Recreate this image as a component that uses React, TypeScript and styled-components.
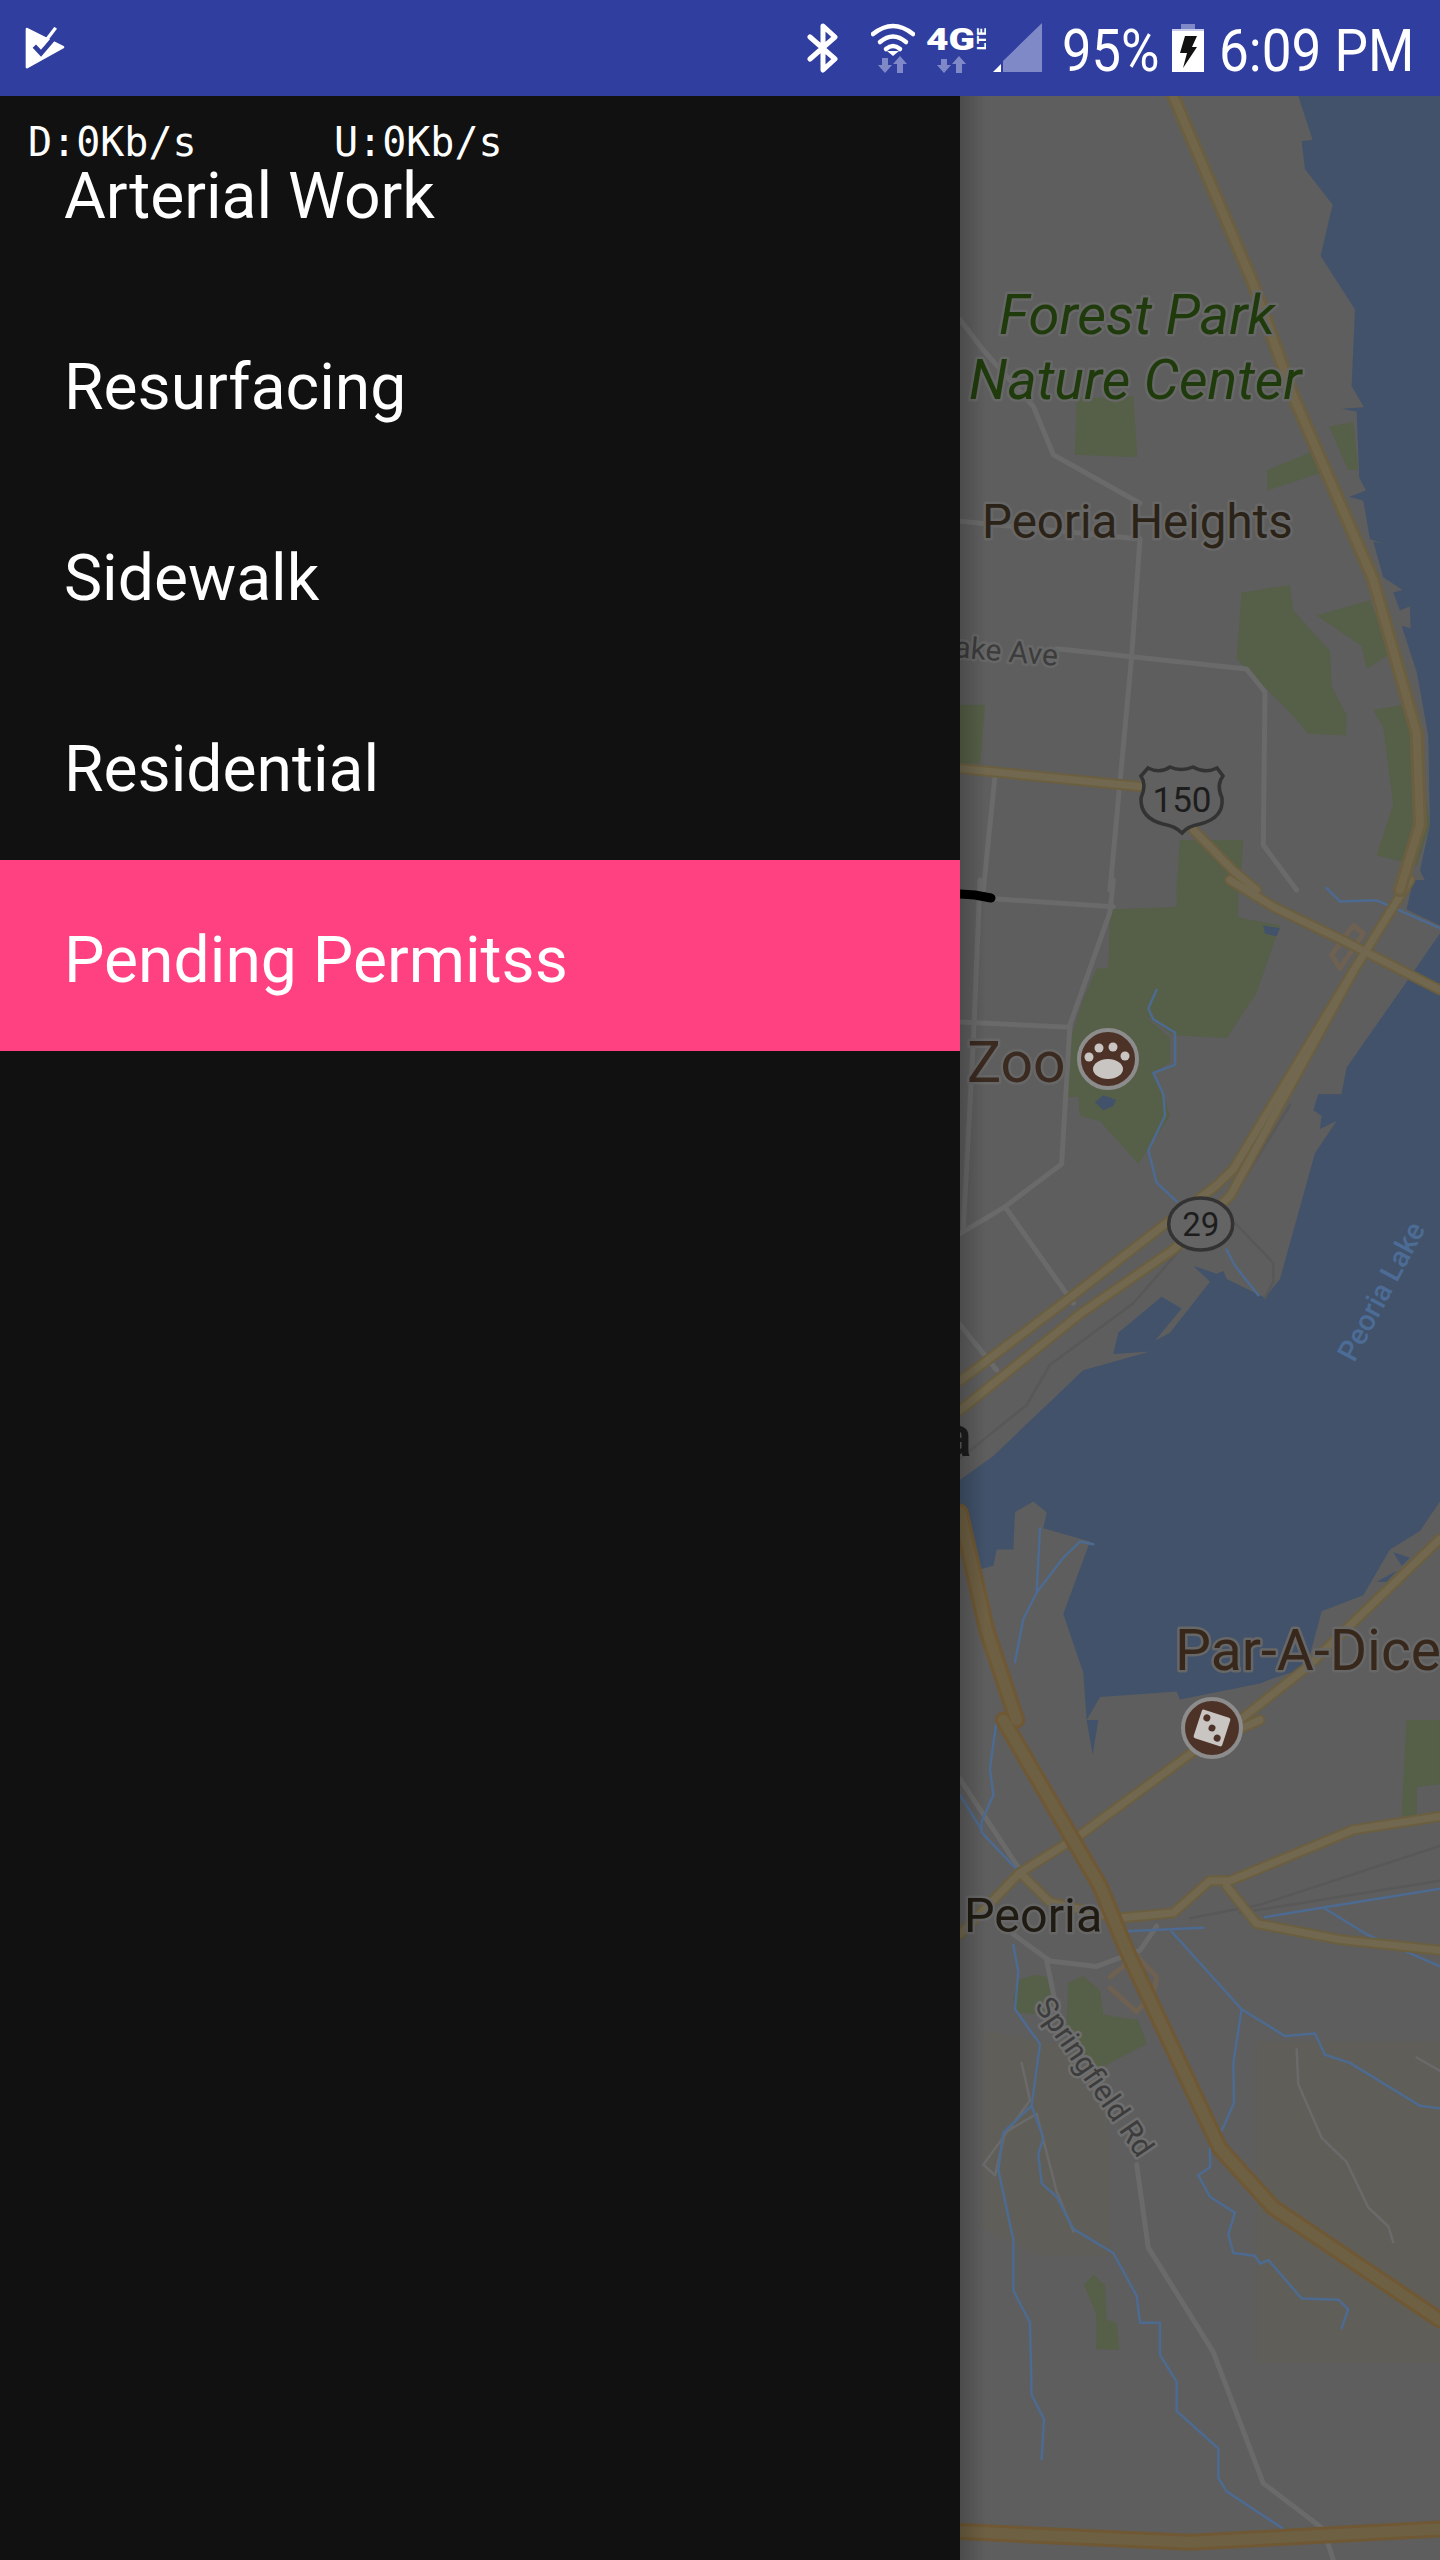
import React from "react";
import styled, { createGlobalStyle } from "styled-components";

const Global = createGlobalStyle`
  html, body { margin: 0; padding: 0; background: #111111; }
  body { font-family: Roboto, "Liberation Sans", sans-serif; }
`;

const Screen = styled.div`
  width: 1440px;
  height: 2560px;
  display: flex;
  flex-direction: column;
  overflow: hidden;
`;

const StatusBar = styled.header`
  height: 96px;
  flex: none;
  background: #303f9f;
  display: flex;
  align-items: center;
  justify-content: space-between;
  padding: 0 25px 0 25px;
  color: #ffffff;
`;

const StatusGroup = styled.div`
  display: flex;
  align-items: center;
`;

const StatusText = styled.span<{ $gap: number; $width: number; $scale: number }>`
  display: inline-block;
  width: ${(p) => p.$width}px;
  margin: 6px 0 0 ${(p) => p.$gap}px;
  font-size: 60px;
  line-height: 90px;
  white-space: nowrap;
  transform: scaleX(${(p) => p.$scale});
  transform-origin: left center;
`;

const StatusIcon = styled.svg<{ $left: number }>`
  display: block;
  flex: none;
  margin-left: ${(p) => p.$left}px;
`;

const Body = styled.div`
  flex: 1;
  display: flex;
  min-height: 0;
`;

const Drawer = styled.nav`
  position: relative;
  width: 960px;
  flex: none;
  background: #111111;
`;

const MenuRow = styled.div<{ $active?: boolean }>`
  height: 191px;
  box-sizing: border-box;
  padding: 8px 0 0 64px;
  display: flex;
  align-items: center;
  font-size: 64.2px;
  color: #ffffff;
  background: ${(p) => (p.$active ? "#ff4081" : "transparent")};
`;

const SpeedOverlay = styled.div`
  position: absolute;
  top: 22px;
  left: 28px;
  display: flex;
  font-family: "DejaVu Sans Mono", monospace;
  font-size: 40px;
  line-height: 48px;
  color: #ffffff;
`;

const SpeedValue = styled.span`
  width: 306px;
`;

const MapPane = styled.main`
  position: relative;
  flex: 1;
  background: #5e5e5e;
  overflow: hidden;
  &::before {
    content: "";
    position: absolute;
    inset: 0 auto 0 0;
    width: 26px;
    background: linear-gradient(to right, rgba(0, 0, 0, 0.2), rgba(0, 0, 0, 0));
    z-index: 2;
  }
`;

const MapSvg = styled.svg`
  display: block;
  width: 480px;
  height: 2464px;
  font-family: Roboto, "Liberation Sans", sans-serif;
`;

type Zone = {
  t: string;
  terrain?: string[];
  parks?: string[];
  water?: string[];
  minor?: string[];
  thin?: string[];
  rail?: string[];
  streams?: string[];
  ramps?: string[];
  secondary?: string[];
  mid?: string[];
  main?: string[];
};

const zones: Zone[] = [
  {
    t: "translate(940 90) scale(0.3333 0.5102)",
    parks: [
      "410,605 580,600 592,720 405,715",
      "1168,660 1240,650 1255,745 1225,745",
      "982,745 1130,705 1145,750 982,785",
      "905,985 1050,970 1060,1020 1170,1100 1175,1170 1220,1225 1218,1265 1105,1262 1050,1220 890,1115",
      "1130,1030 1290,1000 1350,1105 1280,1135 1265,1090",
      "1300,1215 1390,1205 1430,1280 1470,1440 1430,1520 1310,1500 1360,1400 1330,1250",
      "720,1470 910,1470 900,1568 710,1568",
      "60,1205 135,1205 120,1320 60,1320",
    ],
    water: [
      "1075,12 1118,98 1085,100 1095,155 1178,225 1142,325 1245,430 1235,580 1272,622 1205,625 1250,630 1258,760 1278,785 1228,797 1270,805 1290,880 1330,890 1300,885 1330,955 1388,980 1360,985 1380,1020 1410,1012 1412,1055 1385,1050 1430,1140 1465,1265 1470,1440 1440,1530 1470,1568 1500,1568 1500,12",
    ],
    minor: [
      "60,450 130,510 280,620 340,715 600,810",
      "60,845 600,880",
      "600,880 575,1110 510,1568",
      "350,1095 920,1135 975,1180 970,1480 1070,1568",
      "165,1345 130,1568",
    ],
    secondary: ["60,1330 600,1365", "760,1450 880,1530 950,1568"],
    mid: ["700,12 940,380 1060,600 1300,960 1430,1260 1440,1440 1380,1568"],
  },
  {
    t: "translate(940 880) scale(0.3333 0.5357)",
    parks: [
      "470,165 505,165 510,55 710,50 710,0 895,0 895,70 1020,85 950,210 860,295 700,290 610,250 575,232 430,222",
      "430,222 575,232 690,295 690,340 640,360 670,400 690,440 595,530 480,450 420,440 415,405 380,405 390,300",
    ],
    water: [
      "60,1120 160,1075 430,915 630,880 520,885 535,845 665,778 725,800 645,860 690,845 810,750 760,720 830,735 850,730 860,745 975,780 1020,745 1125,510 1190,450 1140,465 1145,440 1120,430 1135,400 1205,400 1195,430 1220,350 1400,190 1500,100 1500,1160 1440,1215 1350,1250 1270,1335 1145,1365 1100,1470 1000,1490 960,1500 720,1530 710,1515 480,1525 440,1568 430,1480 370,1370 450,1235 310,1210 320,1180 280,1160 225,1180 220,1250 170,1250 160,1280 100,1290 60,1180",
      "1420,0 1500,0 1500,85 1400,55",
      "970,85 1020,90 1010,105 975,100",
      "465,415 490,402 528,410 520,422 490,430",
      "1360,1255 1410,1265 1385,1280",
      "1310,1310 1370,1290 1340,1310",
    ],
    minor: [
      "120,0 100,300 70,650",
      "160,35 520,50",
      "520,0 510,60 390,270 365,530 195,610 60,660",
      "60,265 390,275",
      "195,610 400,790",
      "60,830 170,915",
    ],
    rail: [
      "1050,420 880,590",
      "885,640 1000,715 1000,750 975,780",
      "60,1080 260,980 330,905 580,790 720,690",
    ],
    streams: [
      "650,205 625,240 640,260 705,285 705,345 640,360 670,400 675,440 625,505 650,565 710,600",
      "860,690 885,720 955,775",
      "1160,15 1200,40 1310,38 1500,90",
      "300,1210 290,1330 250,1380 225,1460",
      "290,1330 370,1265 420,1235 460,1240",
    ],
    ramps: ["1175,140 1240,85 1270,100 1200,165 1175,140"],
    secondary: [
      "870,0 1000,50 1200,110 1500,205",
      "900,1568 1100,1470 1500,1230",
      "1410,0 1240,170 880,540 830,570 680,640 400,775 60,935",
      "1240,170 870,590 700,690 420,810 60,990",
    ],
    main: ["60,1180 140,1400 230,1568"],
  },
  {
    t: "translate(940 1720) scale(0.3333 0.5357)",
    terrain: [
      "130,580 500,620 510,1000 300,1000 130,950",
      "950,600 1500,600 1500,1200 950,1200",
    ],
    parks: [
      "235,485 290,475 320,480 345,540 300,550 225,545 220,520",
      "385,490 430,478 480,505 490,550 595,560 620,605 480,650 410,610 380,570",
      "1400,0 1500,0 1500,120 1430,125 1430,180 1385,180",
      "432,1055 460,1035 495,1055 500,1120 530,1125 538,1175 470,1175 470,1110",
    ],
    water: ["440,0 475,0 458,65"],
    minor: [
      "60,110 240,280",
      "220,400 330,450 470,460 600,430 650,385",
      "320,450 350,540",
      "590,830 625,985 820,1180 970,1425 1150,1510 1180,1568",
    ],
    thin: [
      "1070,615 1075,680 1145,780 1220,825 1285,910 1345,945 1360,975",
      "245,640 270,710 130,830 165,850 195,770 290,735 350,880 400,955",
      "1430,630 1500,655",
    ],
    rail: ["750,370 960,345 1500,235", "900,360 1500,300"],
    streams: [
      "170,0 150,90 160,140 125,190 125,210 240,285",
      "60,140 125,205",
      "220,420 235,470 225,540 300,605 275,720 190,770 175,840 220,970 220,1065 270,1125 275,1260 312,1305 305,1380",
      "275,720 310,780 295,810 305,865 350,890 400,950 520,995 590,1075 600,1125 660,1125 660,1185 710,1235 710,1290 835,1360 835,1415 860,1440 1030,1510",
      "540,395 790,388",
      "695,395 905,540 1035,590 1125,585 1155,625 1230,640 1440,720 1500,725",
      "905,540 880,640 882,715 850,760 810,800 810,835 775,850 810,890 885,920 865,960 880,995 945,1000 960,1015 985,1008 1085,1080 1195,1082 1225,1100 1205,1135",
      "975,368 1150,350 1500,315",
      "1150,350 1280,400 1500,460",
    ],
    ramps: ["510,480 590,440 650,480 640,510 590,545 510,500"],
    secondary: [
      "60,400 240,285 420,215 780,50 960,0",
      "240,285 330,340 530,370 700,360 810,300 870,300 1240,205 1500,180",
      "860,310 950,380 1200,410 1500,430",
    ],
    main: [
      "190,0 480,310 560,430 840,800 1000,910 1500,1120",
      "60,1515 750,1535 1500,1510",
    ],
  },
];

type LayerKey = Exclude<keyof Zone, "t">;

const FillLayer = ({ k, fill }: { k: LayerKey; fill: string }) => (
  <>
    {zones.map((z, i) => (
      <g key={i} transform={z.t}>
        {(z[k] ?? []).map((p, j) => (
          <polygon key={j} points={p} fill={fill} />
        ))}
      </g>
    ))}
  </>
);

const LineLayer = ({ k, stroke, width }: { k: LayerKey; stroke: string; width: number }) => (
  <>
    {zones.map((z, i) => (
      <g key={i} transform={z.t}>
        {(z[k] ?? []).map((p, j) => (
          <polyline
            key={j}
            points={p}
            fill="none"
            stroke={stroke}
            strokeWidth={width}
            strokeLinejoin="round"
            strokeLinecap="round"
            vectorEffect="non-scaling-stroke"
          />
        ))}
      </g>
    ))}
  </>
);

const Label = styled.text<{ $halo?: string }>`
  paint-order: stroke;
  stroke: ${(p) => p.$halo ?? "#676767"};
  stroke-width: 5px;
  stroke-linejoin: round;
`;

const MapDrawing = () => (
  <MapSvg viewBox="960 96 480 2464" aria-label="Map of Peoria">
    <defs>
      <clipPath id="tileEdge">
        <rect x={960} y={1900} width={480} height={262} />
      </clipPath>
    </defs>
    <FillLayer k="terrain" fill="#5f5e59" />
    <FillLayer k="parks" fill="#565f47" />
    <FillLayer k="water" fill="#41526a" />
    <LineLayer k="minor" stroke="#6a6a6a" width={5} />
    <LineLayer k="thin" stroke="#6a6a6a" width={2.5} />
    <LineLayer k="rail" stroke="#585858" width={2.5} />
    <LineLayer k="streams" stroke="#4d6a90" width={2.5} />
    <LineLayer k="ramps" stroke="#6e6152" width={5} />
    <LineLayer k="secondary" stroke="#6b5f40" width={11} />
    <LineLayer k="secondary" stroke="#71684f" width={7} />
    <LineLayer k="mid" stroke="#6b5f42" width={14} />
    <LineLayer k="mid" stroke="#71654a" width={8} />
    <LineLayer k="main" stroke="#6f5833" width={17} />
    <LineLayer k="main" stroke="#6e6043" width={11} />

    <polyline points="960,894 975,895 991,898" fill="none" stroke="#000" strokeWidth={9} strokeLinecap="round" />

    <Label x={999} y={334} fontSize={56} fontStyle="italic" fill="#1f3a0b">Forest Park</Label>
    <Label x={969} y={399} fontSize={55.5} fontStyle="italic" fill="#1f3a0b">Nature Center</Label>
    <Label x={982} y={538} fontSize={47.5} fill="#2b2317">Peoria Heights</Label>
    <Label x={1057} y={666} fontSize={30} textAnchor="end" fill="#3c3c3c" transform="rotate(5 1057 666)">Lake Ave</Label>

    <path
      d="M1148,768 Q1160,774 1170,767 Q1181,772 1193,767 Q1205,774 1217,768 L1223,776 Q1216,785 1222,798 Q1224,818 1200,824 Q1188,826 1182,833 Q1175,826 1163,824 Q1140,818 1141,798 Q1147,785 1141,776 Z"
      fill="#606060"
      stroke="#333"
      strokeWidth={3.5}
    />
    <text x={1182} y={812} fontSize={35} textAnchor="middle" fill="#1d1d1d">150</text>

    <Label x={967} y={1082} fontSize={57} fill="#3a2a20">Zoo</Label>
    <circle cx={1108} cy={1059} r={29} fill="#4d3227" stroke="#8c8c8c" strokeWidth={4} />
    <g fill="#c9c5c2">
      <ellipse cx={1108} cy={1069} rx={15} ry={10} />
      <circle cx={1089} cy={1057} r={4.5} />
      <circle cx={1099} cy={1048} r={4.5} />
      <circle cx={1113} cy={1047} r={4.5} />
      <circle cx={1125} cy={1056} r={4.5} />
    </g>

    <ellipse cx={1200.7} cy={1224} rx={32} ry={26} fill="#646464" stroke="#333" strokeWidth={3.5} />
    <text x={1200.7} y={1236} fontSize={33} textAnchor="middle" fill="#1d1d1d">29</text>

    <text x={972} y={1456} fontSize={58} fontWeight={500} textAnchor="end" fill="#1c1c1c">a</text>
    <text fontSize={29} fontWeight={500} fill="#4c6c96" textAnchor="middle" transform="translate(1390 1296) rotate(-62)">Peoria Lake</text>

    <Label x={1175} y={1670} fontSize={57} fill="#38281c">Par-A-Dice</Label>
    <circle cx={1212} cy={1728} r={29} fill="#4d3227" stroke="#8c8c8c" strokeWidth={4} />
    <g transform="rotate(18 1212 1728)">
      <rect x={1197} y={1713} width={30} height={30} rx={2} fill="#c9c5c2" />
      <circle cx={1204} cy={1720} r={3.5} fill="#4d3227" />
      <circle cx={1212} cy={1728} r={3.5} fill="#4d3227" />
      <circle cx={1220} cy={1736} r={3.5} fill="#4d3227" />
    </g>

    <Label x={964} y={1932} fontSize={48.5} fill="#1f1b12">Peoria</Label>
    <g clipPath="url(#tileEdge)">
      <Label fontSize={30} fill="#3c3c3c" $halo="#6e6e6e" transform="translate(1034 2006) rotate(55.8)">Springfield Rd</Label>
    </g>
  </MapSvg>
);

const ROWS = ["Arterial Work", "Resurfacing", "Sidewalk", "Residential", "Pending Permitss"];

const LAVENDER = "#8089c8";

export default function App() {
  return (
    <Screen>
      <Global />
      <StatusBar>
        <StatusIcon $left={0} width={40} height={43} viewBox="30 40 120 128" aria-label="App">
          <polygon points="36,46 144,100 36,160" fill="#fff" stroke="#fff" strokeWidth={8} strokeLinejoin="round" />
          <polyline points="58,97 78,118 128,60" fill="none" stroke="#303f9f" strokeWidth={14} />
          <line x1={82} y1={94} x2={122} y2={42} stroke="#fff" strokeWidth={10} />
        </StatusIcon>
        <StatusGroup>
          <StatusIcon $left={0} width={32} height={50} viewBox="0 0 32 50" aria-label="Bluetooth">
            <polyline points="3,14 28,36 16,47 16,3 28,14 3,36" fill="none" stroke="#fff" strokeWidth={5} strokeLinejoin="round" strokeLinecap="round" />
          </StatusIcon>
          <StatusIcon $left={32} width={44} height={50} viewBox="0 0 44 50" aria-label="Wifi">
            <g fill="none" stroke="#fff" strokeWidth={4.5} strokeLinecap="round">
              <path d="M2,11 Q22,-5 42,11" />
              <path d="M9,19 Q22,8 35,19" />
              <path d="M15,26 Q22,20 29,26" />
            </g>
            <polygon points="22,33 16,28 28,28" fill="#fff" />
            <g fill={LAVENDER}>
              <polygon points="11,35 17,35 17,42 21,42 14,50 7,42 11,42" />
              <polygon points="26,50 32,50 32,41 36,41 29,33 22,41 26,41" />
            </g>
          </StatusIcon>
          <StatusIcon $left={11} width={60} height={50} viewBox="0 0 60 50" aria-label="4G LTE">
            <text x={0} y={27} fontSize={31} fontWeight={900} fill="#fff" fontFamily="Roboto, sans-serif" textLength={49} lengthAdjust="spacingAndGlyphs">4G</text>
            <text fontSize={12} fontWeight={900} fill="#fff" fontFamily="Roboto, sans-serif" transform="translate(59.5 27) rotate(-90)" textLength={22} lengthAdjust="spacingAndGlyphs">LTE</text>
            <g fill={LAVENDER}>
              <polygon points="15,36 21,36 21,42 25,42 18,50 11,42 15,42" />
              <polygon points="30,50 36,50 36,41 40,41 33,33 26,41 30,41" />
            </g>
          </StatusIcon>
          <StatusIcon $left={7} width={49} height={50} viewBox="0 0 49 50" aria-label="Signal">
            <polygon points="49,0 49,49 10,49 10,38" fill={LAVENDER} />
            <polygon points="0,49 8,49 8,41" fill="#fff" />
          </StatusIcon>
          <StatusText $gap={20} $width={110} $scale={0.875}>95%</StatusText>
          <StatusIcon $left={0} width={32} height={48} viewBox="0 0 32 48" aria-label="Battery">
            <rect x={9} y={0} width={14} height={6} fill={LAVENDER} />
            <rect x={0} y={5} width={32} height={43} fill="#fff" />
            <rect x={0} y={5} width={32} height={2} fill="#c7cbe8" />
            <polygon points="13,12 25,12 20,23 25,23 11,44 15,29 8,29" fill="#111" />
          </StatusIcon>
          <StatusText $gap={15} $width={196} $scale={0.885}>6:09 PM</StatusText>
        </StatusGroup>
      </StatusBar>
      <Body>
        <Drawer>
          {ROWS.map((r) => (
            <MenuRow key={r} $active={r === "Pending Permitss"}>{r}</MenuRow>
          ))}
          <SpeedOverlay>
            <SpeedValue>D:0Kb/s</SpeedValue>
            <span>U:0Kb/s</span>
          </SpeedOverlay>
        </Drawer>
        <MapPane>
          <MapDrawing />
        </MapPane>
      </Body>
    </Screen>
  );
}
